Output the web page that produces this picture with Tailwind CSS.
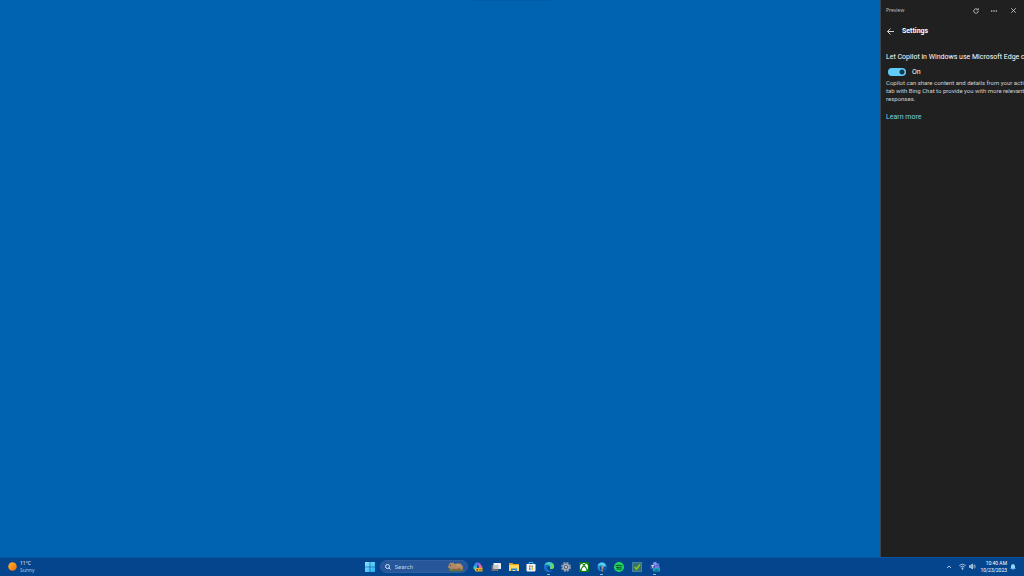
<!DOCTYPE html>
<html lang="en">
<head>
<meta charset="utf-8">
<meta name="viewport" content="width=device-width, initial-scale=1">
<title>Desktop</title>
<script src="https://cdn.jsdelivr.net/npm/@tailwindcss/browser@4"></script>
</head>
<body class="flex h-screen flex-col overflow-hidden bg-[#0063b1] font-['Roboto','Open_Sans',sans-serif] text-white">
<div class="flex min-h-0 flex-1">
  <main class="flex flex-1 justify-center" aria-label="Desktop">
    <div class="ml-36 h-px w-20 bg-[#005ba6]"></div>
  </main>
  <aside class="w-36 overflow-hidden border-l border-[#38444f] bg-[#202020] pl-[5px]" aria-label="Copilot">
    <header class="flex h-[21px] items-center pr-px">
      <span class="flex-1 pt-px font-['Open_Sans'] text-[5px] text-[#c8c8c8]">Preview</span>
      <div class="flex items-center">
        <button aria-label="Refresh" class="flex h-4 w-[18px] items-center justify-center">
          <svg class="size-[6px]" viewBox="0 0 12 12" fill="none" stroke="#e0e0e0" stroke-width="1.5"><path d="M10.5 6A4.5 4.500 0 1 1 8.800 2.500M7 3.800h3.500V.5"/></svg>
        </button>
        <button aria-label="More options" class="flex h-4 w-[18px] items-center justify-center">
          <svg class="size-[6px]" viewBox="0 0 12 12" fill="#f0f0f0"><circle cx="1.500" cy="6" r="1.300"/><circle cx="6" cy="6" r="1.300"/><circle cx="10.500" cy="6" r="1.300"/></svg>
        </button>
        <button aria-label="Close" class="flex h-4 w-5 items-center justify-center">
          <svg class="size-[5px]" viewBox="0 0 10 10" fill="none" stroke="#e0e0e0" stroke-width="1.600"><path d="M.5.5l9 9M9.500.5l-9 9"/></svg>
        </button>
      </div>
    </header>
    <div class="flex h-[21px] items-center gap-2">
      <button aria-label="Back" class="flex size-2 items-center justify-center pb-px">
        <svg class="size-[7px]" viewBox="0 0 14 14" fill="none" stroke="#eee" stroke-width="1.700"><path d="M14 7H1M7 1L1 7l6 6"/></svg>
      </button>
      <h1 class="text-[7px] font-bold">Settings</h1>
    </div>
    <section class="pt-[10px] whitespace-nowrap">
      <h2 id="share-title" class="text-[7px] leading-[10px]">Let Copilot in Windows use Microsoft Edge content</h2>
      <label class="mt-[5px] flex h-[10px] items-center gap-[6px] pl-[2px] text-[7px]">
        <input type="checkbox" role="switch" checked aria-describedby="share-title" class="h-2 w-[18px] appearance-none rounded-full bg-[#60cdff] bg-[radial-gradient(circle_at_14px_4px,#12394c_2px,transparent_3px)]">
        <span>On</span>
      </label>
      <p class="mt-[2px] text-[6px] leading-[8px] text-[#d0d0d0]">Copilot can share content and details from your active<br>tab with Bing Chat to provide you with more relevant<br>responses.</p>
      <a href="#" class="mt-[9px] block text-[7px] leading-[10px] text-[#78d2e4]">Learn more</a>
    </section>
  </aside>
</div>

<footer class="grid h-[19px] grid-cols-[1fr_auto_1fr] items-center border-t border-[#0855a4] bg-[#04458e] pb-px">
  <button class="flex items-center gap-[3px] justify-self-start pl-2 text-left font-['Open_Sans']" aria-label="Weather">
    <svg class="size-[9px]" viewBox="0 0 18 18"><defs><linearGradient id="sun" x1="0" y1="0" x2="1" y2="1"><stop stop-color="#ffb62b"/><stop offset="1" stop-color="#f06c0b"/></linearGradient></defs><circle cx="9" cy="9" r="8.500" fill="url(#sun)"/></svg>
    <span class="text-[5px] leading-[7px]">11°C<br><span class="text-[#b9cde4]">Sunny</span></span>
  </button>

  <nav class="flex items-center pl-1" aria-label="Taskbar">
    <button aria-label="Start" class="mr-[5px]">
      <svg class="size-[10px]" viewBox="0 0 20 20"><defs><linearGradient id="win" x1="0" y1="0" x2="1" y2="1"><stop stop-color="#8ae5ff"/><stop offset="1" stop-color="#22aef0"/></linearGradient></defs><path fill="url(#win)" d="M0 0h9.400v9.400H0zM10.600 0H20v9.400h-9.400zM0 10.600h9.400V20H0zM10.600 10.600H20V20h-9.400z"/></svg>
    </button>
    <label class="mr-[2px] flex h-[13px] w-[88px] items-center gap-1 rounded-full border border-[#315f9e] bg-[#26579a] pr-[2px] pl-1">
      <svg class="size-[6px] shrink-0" viewBox="0 0 12 12" fill="none" stroke="#fff" stroke-width="1.600"><circle cx="5" cy="5" r="4"/><path d="M7.800 7.800l3.400 3.400"/></svg>
      <input type="text" placeholder="Search" aria-label="Search" class="h-2 min-w-0 flex-1 bg-transparent text-[6px] leading-[8px] outline-none placeholder:text-[#c0d0e4]">
      <svg class="h-[11px] w-[18px] shrink-0" viewBox="0 0 36 22"><path fill="#58763c" d="M1 17q4-2 8 0h24l2 2-8 2H7z"/><path fill="#b08a62" d="M4 7l3-4 3 1 3-1 3 3q9-4 14 2 4 5 0 10H8l-2-3-4-2z"/><path fill="#8a6442" d="M10 15q8 2 15-1l4 4H9z"/><path fill="#c09a6e" d="M17 7q8-3 12 2l-8 2z"/><circle cx="7" cy="9" r="1" fill="#35271c"/></svg>
    </label>
    <div class="grid w-[194px] grid-cols-11">
      <button aria-label="Copilot" class="flex h-4 flex-col items-center justify-center">
        <svg class="size-[10px]" viewBox="0 0 20 20"><path fill="#2d8ff0" d="M5 2q2-2 6-1L7 12H1q0-6 4-10z"/><path fill="#3fc7b4" d="M1 9l6-1 1 5-4 3q-4-1-3-7z"/><path fill="#b858e0" d="M11 1q4 0 5 5l2 3-5 2-3-5z"/><path fill="#ed6b78" d="M13 6l5 2q2 3 0 4h-7z"/><path fill="#f2b32c" d="M5 12h14v7H5q-3-3 0-7z"/><path fill="#51431e" d="M7 14h3v3H7zM12 14h1v3h-1zM15 14h2v3h-2z"/></svg>
      </button>
      <button aria-label="Task view" class="flex h-4 flex-col items-center justify-center">
        <svg class="size-[10px]" viewBox="0 0 20 20"><rect x="1" y="6" width="14" height="12" rx="1" fill="#696e74"/><rect x="5" y="2" width="15" height="12" rx="1" fill="#e9edf1"/><path fill="#c4c8cd" d="M5 6h10v8H5z"/></svg>
      </button>
      <button aria-label="File Explorer" class="flex h-4 flex-col items-center justify-center">
        <svg class="size-[10px]" viewBox="0 0 20 20"><path fill="#e7a31b" d="M0 2h7l2 2h11v6H0z"/><path fill="#ffd660" d="M0 6h20v12H0z"/><path fill="#2787d5" d="M4 13h12v5h-3v-2H7v2H4z"/></svg>
      </button>
      <button aria-label="Microsoft Store" class="flex h-4 flex-col items-center justify-center">
        <svg class="size-[10px]" viewBox="0 0 20 20"><path d="M6 5V1h8v4" fill="none" stroke="#39afe5" stroke-width="2"/><path fill="#f1f4f8" d="M1 4h18v13q0 2-2 2H3q-2 0-2-2z"/><path fill="#ee5631" d="M6 7h3v4H6z"/><path fill="#70b83b" d="M11 7h3v4h-3z"/><path fill="#299ce6" d="M6 12h3v4H6z"/><path fill="#f7b829" d="M11 12h3v4h-3z"/></svg>
      </button>
      <button aria-label="Microsoft Edge" class="relative flex h-4 flex-col items-center justify-center">
        <svg class="size-[10px]" viewBox="0 0 20 20"><path fill="#1678d4" d="M0 10Q0 0 10 0t10 9q0 5-5 5-4 0-3-3 0-3-3-3-4 0-4 5 0 5 6 6-11 2-11-9z"/><path fill="#44cfba" d="M1 6Q4 0 11 0q8 1 9 8 0 6-6 6-3 0-2-3 1-5-5-6-4 0-6 1z"/><path fill="#75d653" d="M14 1q6 3 6 8 0 5-6 5-2 0-2-2 5-3 2-11z"/><path fill="#1769c8" d="M7 7q-3 7 4 10 4 1 7-2-3 6-9 5-8-1-8-8 1-5 6-5z"/></svg>
        <span class="absolute bottom-0 h-px w-[3px] rounded-full bg-[#a5bedb]"></span>
      </button>
      <button aria-label="Settings" class="flex h-4 flex-col items-center justify-center">
        <svg class="size-[10px]" viewBox="0 0 20 20"><circle cx="10" cy="10" r="8" fill="none" stroke="#8996a3" stroke-width="4" stroke-dasharray="4.100 2.180"/><circle cx="10" cy="10" r="5.500" fill="#42617e" stroke="#a1abb5" stroke-width="3"/><circle cx="10" cy="10" r="2" fill="#d6dbe0"/></svg>
      </button>
      <button aria-label="Xbox" class="flex h-4 flex-col items-center justify-center">
        <svg class="size-[10px]" viewBox="0 0 20 20"><rect width="20" height="20" rx="2" fill="#107c10"/><circle cx="10" cy="10" r="8" fill="#fff"/><path d="M5 3q3 0 5 3 2-3 5-3M4 16q1-5 6-9 5 4 6 9" fill="none" stroke="#107c10" stroke-width="2.200"/></svg>
      </button>
      <button aria-label="Microsoft Edge Dev" class="relative flex h-4 flex-col items-center justify-center">
        <svg class="size-[10px]" viewBox="0 0 20 20"><path fill="#2a91dc" d="M1 10Q1 1 10 1t9 8q0 5-4 6l-3-2q-1-5-4-4-4 1-2 6l3 3Q1 18 1 10z"/><path fill="#59cfea" d="M3 4q7-5 12-1l3 5-5 1Q8 4 2 8z"/><path fill="#b89a7c" d="M9 8l4 1-2 6 2 4H9z"/><path fill="#1557a8" d="M14 9h5v5l-4 5-2-5z"/></svg>
        <span class="absolute bottom-0 h-px w-[3px] rounded-full bg-[#a5bedb]"></span>
      </button>
      <button aria-label="Spotify" class="flex h-4 flex-col items-center justify-center">
        <svg class="size-[10px]" viewBox="0 0 20 20"><circle cx="10" cy="10" r="10" fill="#1ed760"/><path d="M4 7q7-2 12 1M5 11q6-2 10 1M6 14q5-1 8 1" fill="none" stroke="#0b3b26" stroke-width="1.900" stroke-linecap="round"/></svg>
      </button>
      <button aria-label="Tasks" class="flex h-4 flex-col items-center justify-center">
        <svg class="size-[10px]" viewBox="0 0 20 20"><rect x="1" y="1" width="18" height="18" fill="#39716f" stroke="#4383a2" stroke-width="2"/><path d="M5 10l4 4 7-9" fill="none" stroke="#83c91e" stroke-width="3"/></svg>
      </button>
      <button aria-label="Teams" class="relative flex h-4 flex-col items-center justify-center">
        <svg class="size-[10px]" viewBox="0 0 20 20"><circle cx="10" cy="4" r="4" fill="#8f9bf0"/><circle cx="16" cy="5" r="2.500" fill="#6471d8"/><rect x="5" y="7" width="14" height="9" rx="2" fill="#747be0"/><rect x="1" y="5" width="9" height="9" rx="1" fill="#4c58bd"/><path d="M3 7h5M5.500 7v5" stroke="#fff" stroke-width="1.500"/><rect x="6" y="12" width="14" height="7" rx="2" fill="#17a8bd"/><path d="M9 16h8" stroke="#083f6d" stroke-width="2" stroke-dasharray="2 1"/></svg>
        <span class="absolute bottom-0 h-px w-[3px] rounded-full bg-[#a5bedb]"></span>
      </button>
    </div>
  </nav>

  <div class="flex items-center justify-self-end pr-2">
    <button aria-label="Show hidden icons" class="mr-[7px]"><svg class="size-[6px]" viewBox="0 0 12 12" fill="none" stroke="#e0e9f3" stroke-width="1.600"><path d="M2 8l4-4 4 4"/></svg></button>
    <button aria-label="Network and volume" class="mr-[4px] flex gap-[3px]">
      <svg class="size-[7px]" viewBox="0 0 14 14" fill="none" stroke="#dce7f3" stroke-width="1.500"><path d="M.5 5Q7-.5 13.500 5M3 8q4-3.500 8 0M5 10.500q2-1.500 4 0"/><circle cx="7" cy="12" r=".8" fill="#fff"/></svg>
      <svg class="size-[7px]" viewBox="0 0 14 14" fill="none" stroke="#dce7f3" stroke-width="1.300"><path fill="#8fabcc" d="M1 5h2l4-3v10L3 9H1z"/><path d="M9 5q1.500 2 0 4M11 3q3 4 0 8"/></svg>
    </button>
    <button class="mr-[3px] text-right text-[5px] leading-[7px]">10:40 AM<br>10/23/2023</button>
    <button aria-label="Notifications"><svg class="size-[6px]" viewBox="0 0 12 12" fill="#8ad9fa"><path d="M6 0q4 0 4 5v2l1.500 2.500H.5L2 7V5q0-5 4-5zM4 10h4q-2 3-4 0z"/></svg></button>
  </div>
</footer>
</body>
</html>
